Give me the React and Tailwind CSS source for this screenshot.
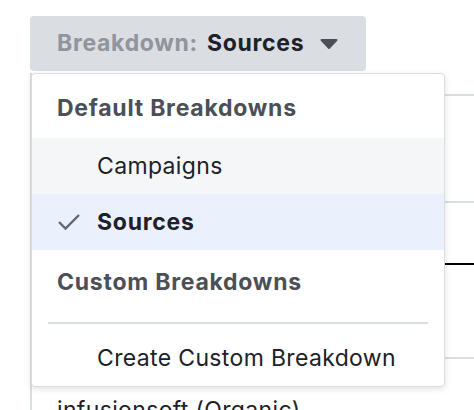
import React from "react";

function Caret() {
  return (
    <svg width="18" height="12" viewBox="0 0 18 12" className="ml-[16px]">
      <path d="M1.5 1h15a1 1 0 0 1 .7 1.7l-7.5 8a1 1 0 0 1-1.4 0l-7.5-8A1 1 0 0 1 1.5 1z" fill="#4b4f56" />
    </svg>
  );
}

function Check() {
  return (
    <span className="flex w-[40px] shrink-0 items-center">
      <svg width="24" height="18" viewBox="0 0 24 18">
        <path d="M2 9l6.5 6.5L22 2" fill="none" stroke="#606770" strokeWidth="2.4" />
      </svg>
    </span>
  );
}

// the report table that sits under the open menu
function TableBehind() {
  return (
    <div className="ml-[30px] mt-[2px] border-l-2 border-[#dadde1] text-[23px] tracking-[0.35px] text-[#1d2129]">
      <div className="h-[23px] border-b-2 border-[#dadde1]" />
      <div className="h-[107px] border-b-2 border-[#dadde1]" />
      <div className="h-[62px] border-b-2 border-black" />
      <div className="h-[94px] border-b-2 border-[#dadde1]" />
      <div className="pl-[25px] pt-[36px] leading-[30px]">infusionsoft (Organic)</div>
    </div>
  );
}

export default function App() {
  return (
    <div className="w-[474px] h-[410px] overflow-hidden bg-white pt-[16px] font-['Inter',sans-serif]">
      <button className="ml-[30px] flex items-center h-[55px] w-[336px] pl-[27px] rounded-[4px] bg-[#dadde1] text-[23px] font-bold tracking-[0.7px]">
        <span className="text-[#90949c]">Breakdown:</span>
        <span className="ml-[9px] text-[#1d2129]">Sources</span>
        <Caret />
      </button>

      <div className="relative">
        <TableBehind />

        <div className="absolute left-[31px] top-0 z-10 w-[414px] rounded-[4px] border border-[#dadde1] bg-white shadow-[0_2px_6px_rgba(0,0,0,0.12)] text-[23px]">
          <div className="h-[64px] pl-[25px] pt-[4px] flex items-center font-bold tracking-[0.75px] text-[#4b4f56]">
            Default Breakdowns
          </div>
          <div className="h-[56px] pl-[65px] flex items-center tracking-[0.35px] bg-[#f5f6f7] text-[#1d2129]">
            Campaigns
          </div>
          <div className="h-[56px] pl-[25px] flex items-center font-bold tracking-[0.75px] bg-[#ebf1fc] text-[#1d2129]">
            <Check />
            Sources
          </div>
          <div className="h-[56px] pl-[25px] pt-[8px] flex items-center font-bold tracking-[0.75px] text-[#4b4f56]">
            Custom Breakdowns
          </div>
          <div className="mx-[16px] mt-[16px] h-[2px] bg-[#dadde1]" />
          <div className="h-[62px] pl-[65px] pt-[6px] flex items-center tracking-[0.35px] text-[#1d2129]">
            Create Custom Breakdown
          </div>
        </div>
      </div>
    </div>
  );
}
